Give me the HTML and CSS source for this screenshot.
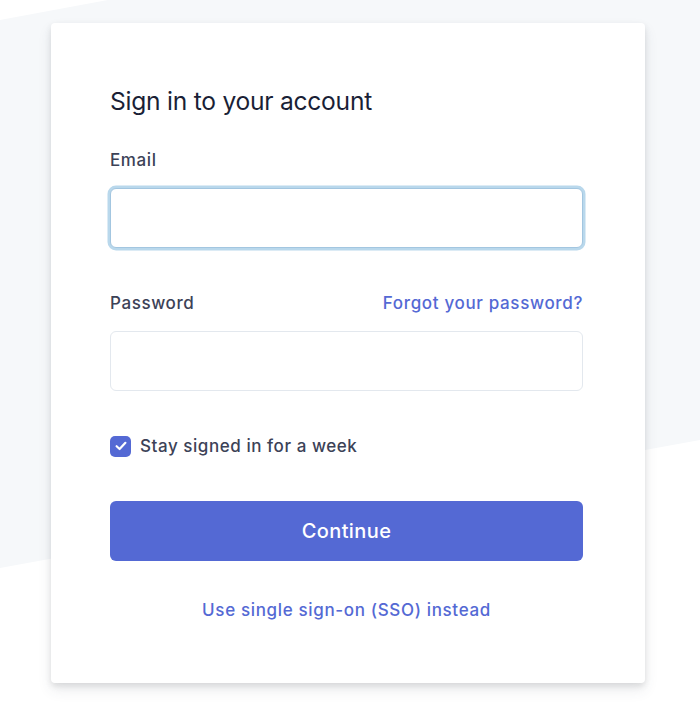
FILE: index.html
```html
<!DOCTYPE html>
<html lang="en">
<head>
<meta charset="utf-8">
<title>Sign in</title>
<link rel="stylesheet" href="styles.css">
</head>
<body>
<div class="backdrop"></div>
<main class="page">
  <form class="card">
    <h1 class="title">Sign in to your account</h1>
    <div class="field">
      <div class="label-row"><label class="label" for="email">Email</label></div>
      <div class="input input-focus" id="email"></div>
    </div>
    <div class="field field-pw">
      <div class="label-row">
        <label class="label" for="pw">Password</label>
        <a class="link">Forgot your password?</a>
      </div>
      <div class="input" id="pw"></div>
    </div>
    <div class="check-row">
      <span class="checkbox">
        <svg width="12" height="10" viewBox="0 0 12 10"><path d="M1.6 5.2 L4.6 8 L10.4 1.8" fill="none" stroke="#fff" stroke-width="2.2" stroke-linecap="round" stroke-linejoin="round"/></svg>
      </span>
      <span class="check-text">Stay signed in for a week</span>
    </div>
    <button class="btn" type="button">Continue</button>
    <div class="sso"><a class="link">Use single sign-on (SSO) instead</a></div>
  </form>
</main>
</body>
</html>
```

FILE: styles.css
```css
* { box-sizing: border-box; }
html, body { margin: 0; padding: 0; }
body {
  width: 700px;
  height: 705px;
  background: #ffffff;
  font-family: Inter, "Noto Sans", "Liberation Sans", sans-serif;
  position: relative;
  overflow: hidden;
}
.backdrop {
  position: absolute;
  inset: 0;
  background: #f6f8fa;
  clip-path: polygon(0 20px, 700px -110px, 700px 440px, 0 568px);
}
.page {
  position: relative;
  padding: 23px 0 0 51px;
}
.card {
  width: 594px;
  height: 660px;
  background: #fff;
  border-radius: 4px;
  box-shadow: 0 7px 14px 0 rgba(60, 66, 87, 0.10), 0 3px 6px 0 rgba(0, 0, 0, 0.10);
  padding: 62px 62px 0 59px;
  display: flex;
  flex-direction: column;
}
.title {
  margin: 0;
  font-size: 24.6px;
  line-height: 32px;
  font-weight: 400;
  color: #1a1f36;
  letter-spacing: -0.25px;
}
.field { display: flex; flex-direction: column; }
.field:first-of-type { margin-top: 31px; }
.label-row {
  display: flex;
  justify-content: space-between;
  align-items: baseline;
  height: 24px;
}
.label {
  font-size: 17px;
  line-height: 24px;
  font-weight: 500;
  color: #3c4257;
  letter-spacing: 0.6px;
}
.link {
  font-size: 17px;
  line-height: 24px;
  font-weight: 500;
  color: #5469d4;
  text-decoration: none;
  letter-spacing: 0.65px;
}
.input {
  margin-top: 16px;
  height: 60px;
  border: 1px solid #e3e8ee;
  border-radius: 6px;
  background: #fff;
}
.input-focus {
  border-color: #a3c6e0;
  box-shadow: 0 0 0 2.5px #b9d8ec;
}
.field-pw { margin-top: 43px; }
.field-pw .input { margin-top: 16px; }
.check-row {
  margin-top: 44px;
  display: flex;
  align-items: center;
  gap: 9px;
  height: 22px;
}
.checkbox {
  width: 21px;
  height: 21px;
  border-radius: 5px;
  background: #5469d4;
  display: flex;
  align-items: center;
  justify-content: center;
}
.check-text {
  font-size: 17px;
  font-weight: 500;
  color: #3c4257;
  letter-spacing: 0.55px;
}
.btn {
  margin-top: 44px;
  height: 60px;
  border: 0;
  border-radius: 6px;
  background: #5469d4;
  color: #fff;
  font-family: inherit;
  font-size: 20px;
  font-weight: 500;
  letter-spacing: 0.4px;
}
.sso {
  margin-top: 37px;
  text-align: center;
}
```
